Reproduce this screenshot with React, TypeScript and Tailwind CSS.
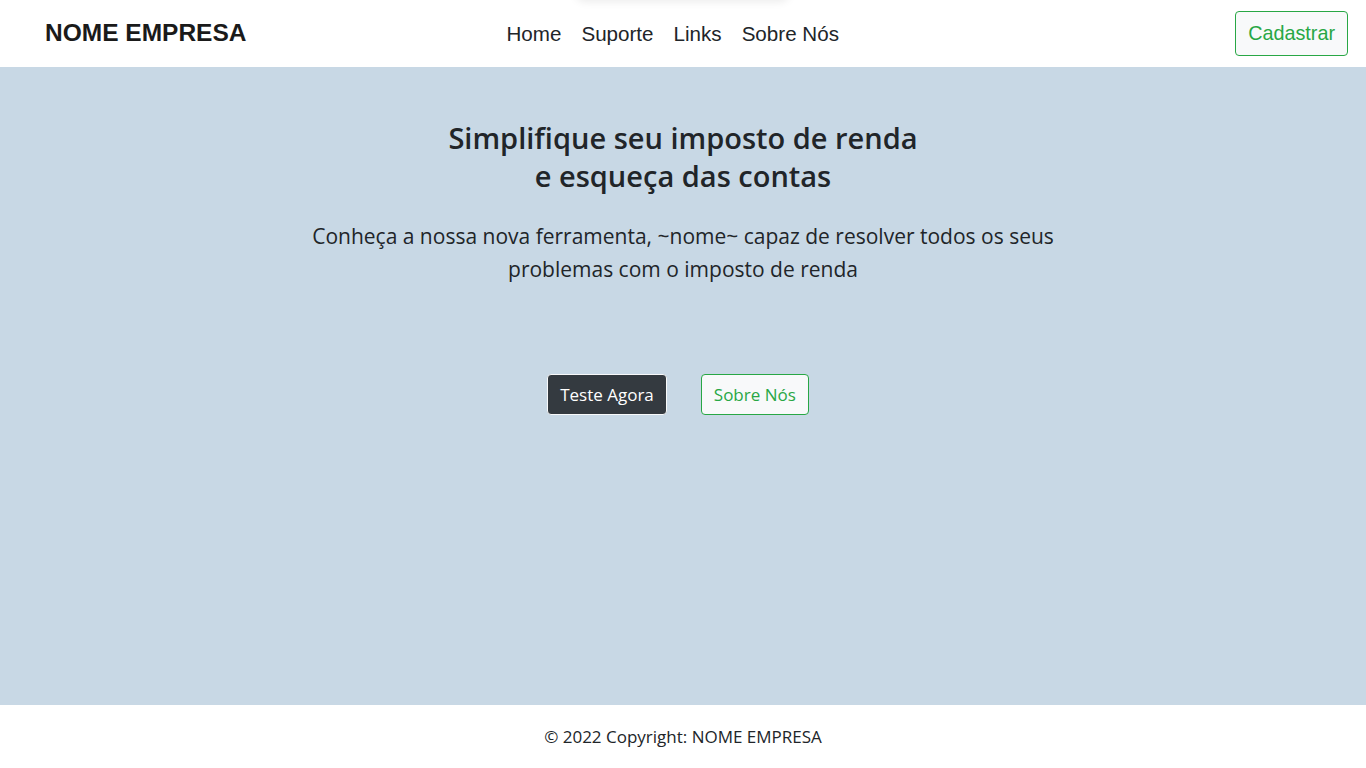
import React from 'react'

export default function App() {
  const links = ['Home', 'Suporte', 'Links', 'Sobre Nós']

  return (
    <div className="min-h-screen flex flex-col bg-white text-[#212529]">
      <header className="relative h-[67px] flex items-center pl-[45px] pr-[18px] bg-white font-['Liberation_Sans',Arial,sans-serif]">
        <div className="absolute left-[575px] top-[-20px] w-[215px] h-[20px] rounded-full shadow-[0_2px_8px_rgba(0,0,0,0.08)]" />
        <a className="text-[24.5px] font-bold text-[#1a1a1a]">NOME EMPRESA</a>
        <nav className="flex gap-[20px] text-[20.6px] ml-[260px] mt-[2px]">
          {links.map((l) => (
            <a key={l} className="text-[#212529]">{l}</a>
          ))}
        </nav>
        <button className="ml-auto h-[45px] px-[12px] text-[19.8px] text-[#28a745] bg-[#f8f9fa] border border-[#28a745] rounded-[4px]">
          Cadastrar
        </button>
      </header>

      <main className="flex-1 h-[638px] bg-[#c8d8e5] flex flex-col items-center pt-[52px] font-['Segoe_UI','Open_Sans','Noto_Sans',sans-serif]">
        <h1 className="text-[29px] font-semibold leading-[38px] text-center text-[#212529]">
          Simplifique seu imposto de renda
          <br />
          e esqueça das contas
        </h1>
        <p className="mt-[25px] max-w-[780px] text-[21px] leading-[33px] text-center text-[#212529]">
          Conheça a nossa nova ferramenta, ~nome~ capaz de resolver todos os seus problemas com o imposto de renda
        </p>
        <div className="flex gap-[34px] mt-[88px] mr-[10px]">
          <button className="h-[41px] px-[12px] text-[17px] text-white bg-[#343a40] border border-[#f8f9fa] rounded-[4px]">
            Teste Agora
          </button>
          <button className="h-[41px] px-[12px] text-[17px] text-[#28a745] bg-[#f8f9fa] border border-[#28a745] rounded-[4px]">
            Sobre Nós
          </button>
        </div>
      </main>

      <footer className="h-[63px] flex items-center justify-center bg-white text-[17px] text-[#212529] font-['Segoe_UI','Open_Sans','Noto_Sans',sans-serif]">
        © 2022 Copyright: NOME EMPRESA
      </footer>
    </div>
  )
}
